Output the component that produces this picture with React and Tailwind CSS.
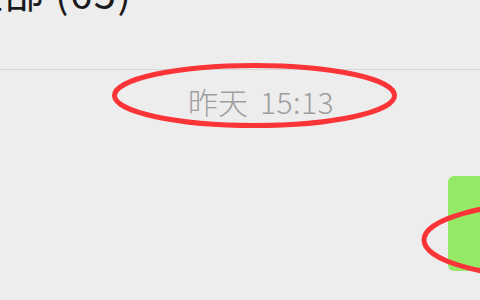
import React from 'react';

const cjk = { fontFamily: '"Noto Sans CJK SC", "Noto Sans", sans-serif' };

export default function App() {
  return (
    <div className="relative w-[480px] h-[300px] overflow-hidden bg-[#ededed]" style={cjk}>
      {/* header (cut off at top) */}
      <div className="h-[70px] border-b border-[#d6d6d6] overflow-hidden">
        <div className="-mt-[29px] -ml-[36px] flex items-baseline text-[40px] leading-[40px] text-[#1a1a1a] whitespace-nowrap">
          <span>全部</span>
          <span className="ml-[11px] tracking-[1.5px]">(65)</span>
        </div>
      </div>

      {/* message area */}
      <div className="flex flex-col">
        <div className="flex justify-center pt-[11px] pl-[42px]">
          <span className="flex gap-[12px] text-[30px] leading-[40px] text-[#9e9e9e] font-light">
            <span>昨天</span>
            <span className="tracking-[0.5px]">15:13</span>
          </span>
        </div>
        <div className="flex justify-end mt-[55px]">
          <div className="w-[40px] h-[95px] -mr-[8px] rounded-[6px] bg-[#95e966]" />
        </div>
      </div>

      {/* red annotation ellipses */}
      <svg className="absolute inset-0 pointer-events-none" width="480" height="300">
        <ellipse cx="254.5" cy="95.5" rx="140" ry="30" fill="none" stroke="#fb3438" strokeWidth="5" />
        <ellipse cx="562" cy="240" rx="138" ry="38" fill="none" stroke="#fb3438" strokeWidth="5" />
      </svg>
    </div>
  );
}
